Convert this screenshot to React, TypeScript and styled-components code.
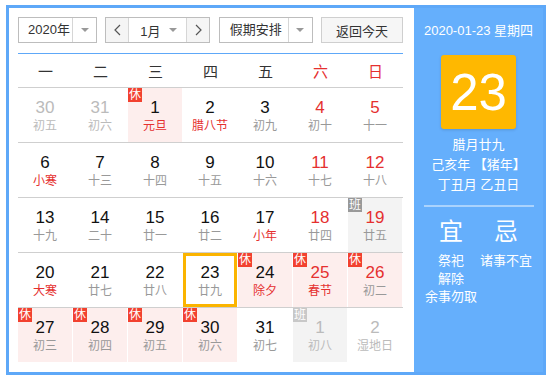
import React from 'react';
import styled, { createGlobalStyle } from 'styled-components';

const GlobalStyle = createGlobalStyle`
  body {
    margin: 0;
    background: #fff;
    font-family: "Liberation Sans", "Noto Sans CJK SC", sans-serif;
  }
  * { box-sizing: border-box; }
`;

const BLUE = '#5ea8f8';
const RED = '#e5302f';

const Frame = styled.div`
  margin: 5px 0 0 6px;
  width: 540px;
  height: 370px;
  border: 3px solid ${BLUE};
  display: flex;
`;

const Main = styled.div`
  width: 405px;
  padding: 9px 0 0 9px;
  display: flex;
  flex-direction: column;
`;

const Toolbar = styled.div`
  width: 385px;
  height: 26px;
  display: flex;
  justify-content: space-between;
`;

const Select = styled.div<{ $w: number }>`
  width: ${(p) => p.$w}px;
  height: 26px;
  border: 1px solid #bdbdbd;
  display: flex;
  font-size: 13px;
  color: #333;
  background: #fff;
`;

const SelectText = styled.div<{ $pl: number }>`
  flex: 1;
  display: flex;
  align-items: center;
  padding-left: ${(p) => p.$pl}px;
  line-height: 24px;
  white-space: nowrap;
`;

const ArrowBox = styled.div`
  width: 24px;
  border-left: 1px solid #d6d6d6;
  display: flex;
  align-items: center;
  justify-content: center;
`;

const Caret = styled.span`
  width: 0;
  height: 0;
  border-left: 4px solid transparent;
  border-right: 4px solid transparent;
  border-top: 4px solid #999;
`;

const MonthText = styled.div`
  flex: 1;
  display: flex;
  align-items: center;
  justify-content: space-between;
  padding: 0 9px 0 11px;
`;

const NavBtn = styled.div<{ $side: 'l' | 'r' }>`
  width: 23px;
  background: #f5f5f5;
  display: flex;
  align-items: center;
  justify-content: center;
  ${(p) => (p.$side === 'l' ? 'border-right' : 'border-left')}: 1px solid #d6d6d6;
`;

const TodayBtn = styled.div`
  width: 82px;
  height: 26px;
  border: 1px solid #cfcfcf;
  background: #f6f6f6;
  font-size: 13px;
  color: #333;
  display: flex;
  align-items: center;
  justify-content: center;
`;

const HeadLine = styled.div`
  width: 385px;
  height: 1px;
  margin-top: 10px;
  background: ${BLUE};
`;

const WeekHead = styled.div`
  width: 385px;
  height: 33px;
  display: grid;
  grid-template-columns: repeat(7, 55px);
  align-items: center;
  font-size: 15px;
`;

const WeekDay = styled.div<{ $red?: boolean }>`
  text-align: center;
  color: ${(p) => (p.$red ? RED : '#333')};
`;

const Row = styled.div`
  width: 385px;
  display: grid;
  grid-template-columns: repeat(7, 54px);
  column-gap: 1px;
  border-top: 1px solid #cfcfcf;
`;

type Kind = 'rest' | 'work' | 'none';

const Cell = styled.div<{ $kind: Kind; $today?: boolean }>`
  position: relative;
  height: 54px;
  padding-top: 10px;
  text-align: center;
  background: ${(p) => (p.$kind === 'rest' ? '#fdeeed' : p.$kind === 'work' ? '#f3f3f3' : '#fff')};
  box-shadow: ${(p) => (p.$today ? 'inset 0 0 0 3px #fbb400' : 'none')};
`;

const DayNum = styled.div<{ $c: string }>`
  font-size: 17px;
  line-height: 20px;
  color: ${(p) => p.$c};
`;

const Lunar = styled.div<{ $c: string }>`
  font-size: 12px;
  line-height: 16px;
  color: ${(p) => p.$c};
`;

const Badge = styled.span<{ $bg: string }>`
  position: absolute;
  top: 0;
  left: 0;
  width: 14px;
  height: 14px;
  font-size: 12px;
  line-height: 14px;
  text-align: center;
  color: #fff;
  background: ${(p) => p.$bg};
`;

const Side = styled.div`
  flex: 1;
  background: #65affc;
  color: #fff;
  display: flex;
  flex-direction: column;
  align-items: center;
  padding-top: 13px;
`;

const SideDate = styled.div`
  font-size: 13px;
  line-height: 20px;
`;

const BigDay = styled.div`
  margin-top: 14px;
  width: 75px;
  height: 74px;
  border-radius: 3px;
  background: #ffb800;
  box-shadow: 0 1px 3px rgba(0, 0, 0, 0.15);
  display: flex;
  align-items: center;
  justify-content: center;
  font-size: 51px;
  line-height: 1;
`;

const InfoLines = styled.div`
  margin-top: 6px;
  font-size: 13px;
  line-height: 20px;
  text-align: center;
`;

const Divider = styled.div`
  margin-top: 10px;
  width: 110px;
  height: 2px;
  background: rgba(255, 255, 255, 0.45);
`;

const Luck = styled.div`
  margin-top: 10px;
  display: grid;
  grid-template-columns: repeat(2, 55px);
  text-align: center;
`;

const LuckHead = styled.div`
  font-size: 24px;
  line-height: 30px;
`;

const LuckList = styled.div`
  margin-top: 5px;
  font-size: 13px;
  line-height: 18px;
  white-space: nowrap;
`;

type Day = {
  n: number;
  l: string;
  nc?: string;
  lc?: string;
  kind?: Kind;
  badge?: '休' | '班';
  bc?: string;
  today?: boolean;
};

const G = '#999';
const K = '#111';
const L = '#bbb';

const rows: Day[][] = [
  [
    { n: 30, l: '初五', nc: L, lc: L },
    { n: 31, l: '初六', nc: L, lc: L },
    { n: 1, l: '元旦', lc: RED, kind: 'rest', badge: '休' },
    { n: 2, l: '腊八节', lc: RED },
    { n: 3, l: '初九' },
    { n: 4, l: '初十', nc: RED },
    { n: 5, l: '十一', nc: RED },
  ],
  [
    { n: 6, l: '小寒', lc: RED },
    { n: 7, l: '十三' },
    { n: 8, l: '十四' },
    { n: 9, l: '十五' },
    { n: 10, l: '十六' },
    { n: 11, l: '十七', nc: RED },
    { n: 12, l: '十八', nc: RED },
  ],
  [
    { n: 13, l: '十九' },
    { n: 14, l: '二十' },
    { n: 15, l: '廿一' },
    { n: 16, l: '廿二' },
    { n: 17, l: '小年', lc: RED },
    { n: 18, l: '廿四', nc: RED },
    { n: 19, l: '廿五', nc: RED, kind: 'work', badge: '班', bc: '#999' },
  ],
  [
    { n: 20, l: '大寒', lc: RED },
    { n: 21, l: '廿七' },
    { n: 22, l: '廿八' },
    { n: 23, l: '廿九', today: true },
    { n: 24, l: '除夕', lc: RED, kind: 'rest', badge: '休' },
    { n: 25, l: '春节', nc: RED, lc: RED, kind: 'rest', badge: '休' },
    { n: 26, l: '初二', nc: RED, kind: 'rest', badge: '休' },
  ],
  [
    { n: 27, l: '初三', kind: 'rest', badge: '休' },
    { n: 28, l: '初四', kind: 'rest', badge: '休' },
    { n: 29, l: '初五', kind: 'rest', badge: '休' },
    { n: 30, l: '初六', kind: 'rest', badge: '休' },
    { n: 31, l: '初七' },
    { n: 1, l: '初八', nc: L, lc: L, kind: 'work', badge: '班', bc: '#c8c8c8' },
    { n: 2, l: '湿地日', nc: L, lc: L },
  ],
];

const weekdays = ['一', '二', '三', '四', '五', '六', '日'];

const Chevron = ({ dir }: { dir: 'l' | 'r' }) => (
  <svg width="7" height="12" viewBox="0 0 7 12">
    <polyline
      points={dir === 'l' ? '6,1 1,6 6,11' : '1,1 6,6 1,11'}
      fill="none"
      stroke="#555"
      strokeWidth="1.2"
    />
  </svg>
);

export default function App() {
  return (
    <>
      <GlobalStyle />
      <Frame>
        <Main>
          <Toolbar>
            <Select $w={79}>
              <SelectText $pl={9}>2020年</SelectText>
              <ArrowBox>
                <Caret />
              </ArrowBox>
            </Select>
            <Select $w={105}>
              <NavBtn $side="l">
                <Chevron dir="l" />
              </NavBtn>
              <MonthText>
                <span>1月</span>
                <Caret />
              </MonthText>
              <NavBtn $side="r">
                <Chevron dir="r" />
              </NavBtn>
            </Select>
            <Select $w={94}>
              <SelectText $pl={10}>假期安排</SelectText>
              <ArrowBox>
                <Caret />
              </ArrowBox>
            </Select>
            <TodayBtn>返回今天</TodayBtn>
          </Toolbar>
          <HeadLine />
          <WeekHead>
            {weekdays.map((w, i) => (
              <WeekDay key={w} $red={i >= 5}>
                {w}
              </WeekDay>
            ))}
          </WeekHead>
          {rows.map((r, ri) => (
            <Row key={ri}>
              {r.map((d, di) => (
                <Cell key={di} $kind={d.kind || 'none'} $today={d.today}>
                  {d.badge && <Badge $bg={d.bc || '#f2412f'}>{d.badge}</Badge>}
                  <DayNum $c={d.nc || K}>{d.n}</DayNum>
                  <Lunar $c={d.lc || G}>{d.l}</Lunar>
                </Cell>
              ))}
            </Row>
          ))}
        </Main>
        <Side>
          <SideDate>2020-01-23 星期四</SideDate>
          <BigDay>23</BigDay>
          <InfoLines>
            <div>腊月廿九</div>
            <div>己亥年 【猪年】</div>
            <div>丁丑月 乙丑日</div>
          </InfoLines>
          <Divider />
          <Luck>
            <div>
              <LuckHead>宜</LuckHead>
              <LuckList>
                <div>祭祀</div>
                <div>解除</div>
                <div>余事勿取</div>
              </LuckList>
            </div>
            <div>
              <LuckHead>忌</LuckHead>
              <LuckList>
                <div>诸事不宜</div>
              </LuckList>
            </div>
          </Luck>
        </Side>
      </Frame>
    </>
  );
}
